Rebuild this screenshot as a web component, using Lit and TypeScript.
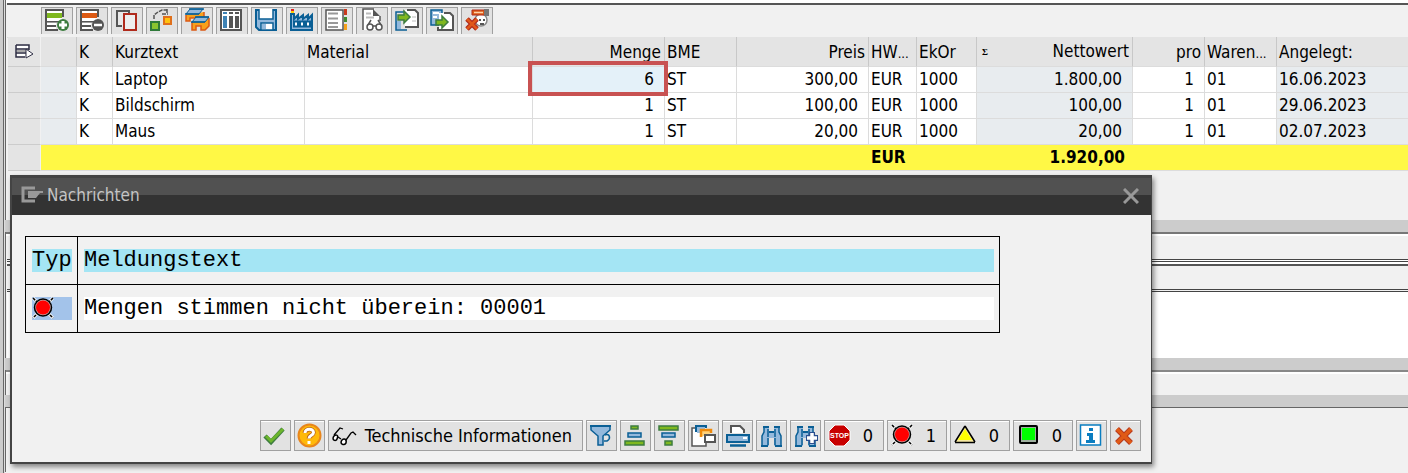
import { LitElement, html, css, svg, TemplateResult } from "lit";
import { customElement } from "lit/decorators.js";
import { classMap } from "lit/directives/class-map.js";

const GREY = "#555555";
const BLUE = "#0a5f95";
const SKY = "#94b9dc";
const GREEN = "#3d7c3f";
const LIME = "#7fb81f";
const RED = "#b02a1c";
const ORANGE = "#dc5a14";

const rows = (bar: string, disc: string, sign: TemplateResult) => svg`
  <path d="M1 1V22H13M1 2H18V9M1 13.5H15M1 18H11" fill="none" stroke="${GREY}" stroke-width="2"/>
  <rect x="2" y="3" width="15" height="10" fill="#fff"/>
  <rect x="2" y="5" width="15" height="5" fill="${bar}"/>
  <rect x="2" y="15" width="9" height="2" fill="#fff"/>
  <rect x="2" y="19" width="9" height="2" fill="#fff"/>
  <circle cx="18" cy="17" r="6" fill="${disc}"/>${sign}`;

const binoculars = svg`
  <path d="M4 3H9V7H14V3H19V7L21 12V22H14V14H9V22H2V12L4 7Z" fill="${SKY}"/>
  <path d="M3 3H9M14 3H20M9 8H14M1 22H8M15 22H22" stroke="${BLUE}" stroke-width="2"/>
  <path d="M4 4V8L2 12V22M8 14V21M8 5V13M15 5V13M15 14V21M19 4V8L21 12V22" fill="none" stroke="${BLUE}" stroke-width="1.5"/>`;

const redLight = svg`
  <path d="M1 1L21 21M21 1L1 21" stroke="#fff" stroke-width="3"/>
  <path d="M1 1L21 21M21 1L1 21" stroke="#000" stroke-width="1.500" stroke-dasharray="3 1"/>
  <circle cx="11" cy="10.500" r="8.500" fill="#c9a0a0" stroke="#000" stroke-width="1.500"/>
  <circle cx="11" cy="10.500" r="7" fill="#f00"/>`;

const ICONS: Record<string, TemplateResult> = {
  add: rows(LIME, GREEN, svg`<path d="M18 13V21M14 17H22" stroke="#fff" stroke-width="3"/>`),
  remove: rows(ORANGE, GREY, svg`<path d="M14 17H22" stroke="#fff" stroke-width="2.500"/>`),
  copy: svg`
    <rect x="1" y="2" width="14" height="17" fill="#e8e8e8"/>
    <path d="M14 3H2V18H7M14 2V5" fill="none" stroke="${GREY}" stroke-width="2"/>
    <rect x="9" y="6" width="12" height="16" fill="#eee" stroke="${RED}" stroke-width="2"/>`,
  link: svg`
    <rect x="1" y="14" width="8" height="8" fill="#8ac52f" stroke="#2f7a3a" stroke-width="2"/>
    <rect x="14" y="9" width="7" height="7" fill="#ffc20e" stroke="#e0701c" stroke-width="2"/>
    <path d="M4 11V7L8 4L12 2H18M17 1V6M12 6H18" fill="none" stroke="${GREY}" stroke-width="1.500" stroke-dasharray="4 1"/>`,
  tables: svg`
    <path d="M1 7V13H5V10H12V13H16L19 9V4" fill="#f8a11c" stroke="${ORANGE}" stroke-width="1.500"/>
    <path d="M5 1H18L14 6H1Z" fill="${SKY}" stroke="${BLUE}" stroke-width="1"/>
    <path d="M4 1H19M0 6H14" stroke="${BLUE}" stroke-width="1.500"/>
    <path d="M7 14V22H11V18H16V22H20L24 18V10" fill="#f8a11c" stroke="${ORANGE}" stroke-width="1.500"/>
    <path d="M11 9H24L20 14H7Z" fill="${SKY}" stroke="${BLUE}" stroke-width="1"/>
    <path d="M10 9H24M6 14H20" stroke="${BLUE}" stroke-width="1.500"/>`,
  columns: svg`
    <rect x="1" y="2" width="20" height="20" fill="#fff" stroke="${GREY}" stroke-width="2"/>
    <path d="M5 8V20M5 4V6" stroke="#3f83b5" stroke-width="4"/>
    <path d="M11 8V20M17 8V20M11 4V6M17 4V6" stroke="${GREY}" stroke-width="4"/>`,
  save: svg`
    <path d="M1 2H21V22H4L1 19Z" fill="${SKY}" stroke="${BLUE}" stroke-width="2"/>
    <path d="M4 1V11H18V1" fill="#fff" stroke="${BLUE}" stroke-width="1.500"/>
    <rect x="6" y="15" width="12" height="7" fill="#fff" stroke="${BLUE}" stroke-width="1.500"/>
    <rect x="7" y="16" width="4" height="5" fill="${SKY}"/>`,
  factory: svg`
    <path d="M1 22V6H4V11L8 7V11L13 7V11L18 7V11L22 7V22Z" fill="${SKY}" stroke="${BLUE}" stroke-width="2"/>
    <rect x="1" y="1" width="3" height="2" fill="#d22"/><rect x="1" y="3" width="3" height="2" fill="#fc0"/>
    <path d="M4 13.500H8V18.500H4ZM10 13.500H14V18.500H10ZM16 13.500H20V18.500H16Z" fill="#fff" stroke="${BLUE}" stroke-width="2"/>`,
  index: svg`
    <rect x="1" y="2" width="17" height="20" fill="#fff" stroke="${GREY}" stroke-width="1.500"/>
    <path d="M3 5.500H13M3 10.500H13M3 15H13M3 19H13" stroke="#999" stroke-width="2"/>
    <rect x="19" y="1" width="3" height="6" fill="#c93a1e"/><rect x="19" y="9" width="3" height="5" fill="#3f8c2f"/>
    <rect x="19" y="16" width="3" height="6" fill="#f5a21b"/>`,
  inspect: svg`
    <path d="M3 1H14L20 8V22H3Z" fill="#fff"/>
    <path d="M3 22V1H14M20 8V13" fill="none" stroke="${GREY}" stroke-width="1.500"/>
    <path d="M13 1L20 8H13Z" fill="${GREY}"/>
    <path d="M6 5.500H11M6 9.500H14" stroke="#bbb" stroke-width="2"/>
    <circle cx="10" cy="19" r="3" fill="#fff" stroke="${GREY}" stroke-width="1.500"/>
    <circle cx="19" cy="19" r="3" fill="#fff" stroke="${GREY}" stroke-width="1.500"/>
    <path d="M8 17L11 12M21 17L18 12M13 18H16" stroke="${GREY}" stroke-width="1.500"/>`,
  importDoc: svg`
    <path d="M10 2H20L23 5V20H10Z" fill="#fff"/>
    <path d="M12 2H20L23 5V19H10" fill="none" stroke="${GREY}" stroke-width="2"/>
    <path d="M17 9H21M17 13H21" stroke="#bbb"/>
    <path d="M1 13H6V21H1Z" fill="${SKY}"/>
    <path d="M9 4H1V22H12" fill="none" stroke="${BLUE}" stroke-width="1.500"/>
    <path d="M3 7H9V3L15 9L9 15V12H3Z" fill="${LIME}" stroke="${GREEN}" stroke-width="1.500"/>`,
  exportDoc: svg`
    <path d="M1 2H12V17H1Z" fill="${SKY}" stroke="${BLUE}" stroke-width="1.500"/>
    <path d="M3 5H9M3 9H7" stroke="#fff" stroke-width="2"/>
    <path d="M9 5H20L23 8V22H9Z" fill="#fff"/>
    <path d="M14 5H20L23 8V22H8V19" fill="none" stroke="${GREY}" stroke-width="2"/>
    <path d="M6 12H12V8L18 14L12 20V17H6Z" fill="${LIME}" stroke="${GREEN}" stroke-width="1.500"/>`,
  cancelItem: svg`
    <circle cx="16" cy="12" r="6" fill="#fff" stroke="#888" stroke-width="1.500"/>
    <path d="M14 12H16M18 12H20M15 16H19" stroke="${GREY}" stroke-width="2"/>
    <path d="M7 2H20V7H7Z" fill="${ORANGE}" stroke="${RED}" stroke-width="1"/>
    <path d="M9 4.500H18" stroke="#ffd0a8" stroke-width="1.500"/>
    <rect x="19" y="1" width="5" height="7" fill="#777"/>
    <path d="M2 11L12 21M12 11L2 21" stroke="${RED}" stroke-width="5"/>
    <path d="M2 11L12 21M12 11L2 21" stroke="#e0581a" stroke-width="2.500"/>`,
  check: svg`<path d="M1 12L7 18L19 5" fill="none" stroke="${GREEN}" stroke-width="4.500"/>
    <path d="M2 12L7 17L19 5" fill="none" stroke="#6cb52c" stroke-width="3"/>`,
  help: svg`<circle cx="11.500" cy="11.500" r="11" fill="#ffb909" stroke="#e8861c" stroke-width="2"/>
    <path d="M7 9C7 4 15.500 4 15.500 8.500C15.500 11.500 11 11 11 14.500" fill="none" stroke="#b9631a" stroke-width="4.500"/>
    <path d="M7 9C7 4 15.500 4 15.500 8.500C15.500 11.500 11 11 11 14.500M11 17V20" fill="none" stroke="#fff" stroke-width="3"/>`,
  glasses: svg`
    <path d="M2 12C-1 16 4 18 5 15C7 11 4 10 2 12ZM10 16C7 20 12 22 14 19C15 15 12 14 10 16Z" fill="#fff" stroke="#000" stroke-width="1.500"/>
    <path d="M2 11L8 4L11 5M6 13L9 15M14 16L19 9L21 8L24 11" fill="none" stroke="#000" stroke-width="1.300"/>`,
  filter: svg`
    <path d="M1 2H20V6L13 12V21H8V12L1 6Z" fill="${SKY}" stroke="${BLUE}" stroke-width="1.500"/>
    <path d="M0 2H21" stroke="${BLUE}" stroke-width="2"/>
    <path d="M15 11C20 9 21 15 17 17H14" fill="#e3e3e3" stroke="${BLUE}" stroke-width="1.500"/>`,
  sortUp: svg`
    <rect x="7" y="2" width="7" height="3" fill="${LIME}" stroke="${GREEN}" stroke-width="1.500"/>
    <rect x="4" y="9" width="13" height="4" fill="${SKY}" stroke="${BLUE}" stroke-width="1.500"/>
    <rect x="1" y="17" width="19" height="4" fill="${LIME}" stroke="${GREEN}" stroke-width="1.500"/>`,
  sortDown: svg`
    <rect x="1" y="2" width="19" height="4" fill="${LIME}" stroke="${GREEN}" stroke-width="1.500"/>
    <rect x="4" y="9" width="13" height="4" fill="${SKY}" stroke="${BLUE}" stroke-width="1.500"/>
    <rect x="7" y="17" width="7" height="4" fill="${LIME}" stroke="${GREEN}" stroke-width="1.500"/>`,
  layers: svg`
    <path d="M0 4H14V22H0Z" fill="#fff"/><path d="M3 4H0V22H14V19" fill="none" stroke="${GREY}" stroke-width="1.500"/>
    <path d="M4 8V2H14V4" fill="none" stroke="${BLUE}" stroke-width="2"/><rect x="5" y="3" width="8" height="6" fill="${SKY}"/>
    <path d="M9 13V6H19V9" fill="#ffd27a" stroke="#f08a0a" stroke-width="2.500"/>
    <rect x="13" y="11" width="10" height="7" fill="#fff" stroke="${GREY}" stroke-width="2"/>`,
  print: svg`
    <path d="M5 9V2H14L18 6V9" fill="#fff" stroke="${GREY}" stroke-width="2"/>
    <rect x="1" y="11" width="22" height="7" fill="${SKY}" stroke="${BLUE}" stroke-width="2"/>
    <rect x="17" y="13" width="4" height="2" fill="#fff"/>
    <path d="M4 21.500H20" stroke="${BLUE}" stroke-width="2.500"/>`,
  find: binoculars,
  findNext: svg`${binoculars}<path d="M18 8V20M12 14H24" stroke="#2b4f8f" stroke-width="6"/>
    <path d="M18 9V19M13 14H23" stroke="#fff" stroke-width="3.500"/>`,
  stop: svg`<path d="M7 1H16L22 7V16L16 22H7L1 16V7Z" fill="#c80000" stroke="#fff" stroke-width="1"/>
    <text x="11.500" y="14" text-anchor="middle" font-size="7" font-weight="700" font-family="Liberation Sans, sans-serif" fill="#fff">STOP</text>`,
  red: redLight,
  yellow: svg`<path d="M11 2L21 19H1Z" fill="#f7e9a0"/><path d="M11 2L1 18M11 2L21 18M1 18.500H21" stroke="#000" stroke-width="1.500"/>
    <path d="M11 5L18 16H4Z" fill="#ff0"/>`,
  green: svg`<rect x="3" y="2" width="17" height="17" rx="1" fill="#9fb09f" stroke="#000" stroke-width="2"/>
    <rect x="5" y="4" width="13" height="12" fill="#0f0"/>`,
  info: svg`<rect x="0.500" y="1" width="20" height="20" fill="#fff" stroke="#0a7dc0" stroke-width="1.500"/>
    <path d="M9 4H13V7H9ZM7 9H13V16H15V19H6V16H9V12H7Z" fill="#0a7dc0"/>`,
  cross: svg`<path d="M3 5L17 19M17 5L3 19" stroke="#b8381c" stroke-width="5.500"/>
    <path d="M3 5L17 19M17 5L3 19" stroke="#e05a16" stroke-width="3.500"/>`,
};

const icon = (name: string) =>
  html`<svg class="icon" viewBox="0 0 24 24" width="24" height="24" aria-hidden="true">${ICONS[name]}</svg>`;

const TOOLS: [string, string][] = [
  ["add", "Zeile einfügen"],
  ["remove", "Zeile löschen"],
  ["copy", "Kopieren"],
  ["link", "Verknüpfen"],
  ["tables", "Positionen"],
  ["columns", "Spalten"],
  ["save", "Sichern"],
  ["factory", "Werk"],
  ["index", "Verzeichnis"],
  ["inspect", "Anzeigen"],
  ["importDoc", "Importieren"],
  ["exportDoc", "Exportieren"],
  ["cancelItem", "Stornieren"],
];

const ITEMS = [
  ["K", "Laptop", "", "6", "ST", "300,00", "EUR", "1000", "1.800,00", "1", "01", "16.06.2023"],
  ["K", "Bildschirm", "", "1", "ST", "100,00", "EUR", "1000", "100,00", "1", "01", "29.06.2023"],
  ["K", "Maus", "", "1", "ST", "20,00", "EUR", "1000", "20,00", "1", "01", "02.07.2023"],
];
const NUMERIC = [3, 5, 8, 9];
const READONLY = [8, 11];

const ACTIONS: { icon: string; label: string; text?: string; count?: number }[] = [
  { icon: "check", label: "Weiter" },
  { icon: "help", label: "Hilfe" },
  { icon: "glasses", label: "Technische Informationen", text: "Technische Informationen" },
  { icon: "filter", label: "Filter" },
  { icon: "sortUp", label: "Aufsteigend sortieren" },
  { icon: "sortDown", label: "Absteigend sortieren" },
  { icon: "layers", label: "Layout" },
  { icon: "print", label: "Drucken" },
  { icon: "find", label: "Suchen" },
  { icon: "findNext", label: "Weitersuchen" },
  { icon: "stop", label: "Abbruch", count: 0 },
  { icon: "red", label: "Fehler", count: 1 },
  { icon: "yellow", label: "Warnungen", count: 0 },
  { icon: "green", label: "Informationen", count: 0 },
  { icon: "info", label: "Info" },
  { icon: "cross", label: "Abbrechen" },
];

@customElement("message-dialog")
export class MessageDialog extends LitElement {
  static styles = css`
    :host {
      display: block;
      box-sizing: border-box;
      background: #f1f1f1;
      border: solid #444;
      border-width: 0 1px 2px 2px;
      box-shadow: 2px 3px 5px rgba(0, 0, 0, 0.45);
    }
    .title {
      display: flex;
      align-items: center;
      justify-content: space-between;
      box-sizing: border-box;
      height: 40px;
      padding: 0 12px 3px 9px;
      border-top: 3px solid #444;
      background: linear-gradient(#515151 17px, #333 17px);
      color: #c4c4c4;
    }
    .caption {
      display: flex;
      align-items: center;
      gap: 4px;
      margin: 0;
      font-size: 17px;
      font-weight: 400;
      line-height: 24px;
    }
    .close {
      display: flex;
      padding: 0;
      border: 0;
      margin-top: 2px;
      background: none;
    }
    .body {
      padding: 21px 151px 87px 13px;
    }
    .messages {
      width: 100%;
      border-collapse: collapse;
      table-layout: fixed;
      font: 22px/24px "Courier New", "Liberation Mono", monospace;
      color: #000;
    }
    .messages th,
    .messages td {
      height: 48px;
      box-sizing: border-box;
      padding: 0 5px 0 6px;
      border: 1px solid #000;
      font-weight: 400;
      text-align: left;
    }
    .type {
      width: 52px;
    }
    .fill {
      display: block;
      height: 23px;
      white-space: nowrap;
      overflow: hidden;
    }
    .head {
      background: #a4e5f4;
    }
    .state {
      background: #a3c3ea;
    }
    .text {
      background: #fff;
    }
    .actions {
      display: flex;
      justify-content: flex-end;
      gap: 3px;
      padding: 0 10px 11px;
      font-size: 18px;
    }
    .action {
      display: flex;
      align-items: center;
      justify-content: space-between;
      box-sizing: border-box;
      width: 31px;
      height: 31px;
      padding: 0 2px 0 3px;
      border: 1px solid #a0a0a0;
      box-shadow: inset 0 1px #fff;
      background: #e2e2e2;
      color: #000;
      font: inherit;
      white-space: nowrap;
    }
    .wide {
      width: 255px;
      padding-right: 10px;
    }
    .counter {
      width: 60px;
      padding-right: 10px;
    }
    .icon {
      display: block;
      flex: none;
      overflow: visible;
    }
  `;

  render() {
    return html`
      <header class="title">
        <h1 class="caption">
          <svg width="22" height="18" viewBox="0 0 22 18" aria-hidden="true">
            <path d="M14 2H2V15H14" fill="none" stroke="#999" stroke-width="3" />
            <path d="M7 5H22V7H19L15 12H7Z" fill="#999" />
          </svg>
          Nachrichten
        </h1>
        <button class="close" aria-label="Schließen">
          <svg width="16" height="16" viewBox="0 0 16 16" aria-hidden="true">
            <path d="M1 1L15 15M15 1L1 15" stroke="#999" stroke-width="3" />
          </svg>
        </button>
      </header>
      <div class="body">
        <table class="messages">
          <tr>
            <th class="type"><span class="fill head">Typ</span></th>
            <th><span class="fill head">Meldungstext</span></th>
          </tr>
          <tr>
            <td><span class="fill state">${icon("red")}</span></td>
            <td><span class="fill text">Mengen stimmen nicht überein: 00001</span></td>
          </tr>
        </table>
      </div>
      <footer class="actions">
        ${ACTIONS.map(
          (a) => html`<button
            class=${classMap({ action: true, wide: !!a.text, counter: a.count !== undefined })}
            aria-label=${a.count === undefined ? a.label : `${a.label}: ${a.count}`}
          >
            ${icon(a.icon)}${a.text ? html`<span>${a.text}</span>` : ""}${a.count !== undefined
              ? html`<span>${a.count}</span>`
              : ""}
          </button>`
        )}
      </footer>
    `;
  }
}

@customElement("app-root")
export class AppRoot extends LitElement {
  static styles = css`
    :host {
      display: block;
      position: relative;
      box-sizing: border-box;
      min-height: 100vh;
      overflow: hidden;
      padding-left: 5px;
      background: linear-gradient(90deg, #ccc 3px, #666 3px, #666 4px, #ddd 4px, #ddd 5px, #f1f1f1 5px);
      color: #000;
      font: 17px/24px "DejaVu Sans Condensed", "Noto Sans", sans-serif;
    }
    .panel {
      border-left: 1px solid #666;
    }
    .items {
      height: 220px;
      box-sizing: border-box;
      padding: 3px 0 0 1px;
      background: linear-gradient(#fff 3px, #f1f1f1 3px);
    }
    .tools {
      display: flex;
      gap: 3px;
      height: 34px;
      box-sizing: border-box;
      padding: 2px 0 0 34px;
      border-top: 2px solid #555;
    }
    .tool {
      display: flex;
      align-items: flex-start;
      box-sizing: border-box;
      width: 32px;
      height: 27px;
      padding: 0 3px;
      border: 1px solid #a0a0a0;
      border-bottom: 0;
      background: #e2e2e2;
    }
    .tool .icon {
      display: block;
      overflow: visible;
    }
    .scroller {
      padding-left: 1px;
      border-top: 1px solid #ddd;
    }
    .grid {
      width: 100%;
      border-spacing: 0;
      table-layout: fixed;
      margin-top: -1px;
    }
    .grid th,
    .grid td {
      position: relative;
      box-sizing: border-box;
      height: 26px;
      padding: 0 2px 2px;
      border: solid #dcdcdc;
      border-width: 0 1px 1px 0;
      background: #fff;
      font-weight: 400;
      text-align: left;
      white-space: nowrap;
      line-height: 22px;
    }
    .grid .handle {
      background: #e4e4e4;
      border-bottom-color: #ccc;
      border-right-color: #f1f1f1;
    }
    .grid thead th {
      height: 30px;
      padding-bottom: 0;
      border-right-color: #c8c8c8;
      background: #e4e4e4;
    }
    .grid .readonly {
      background: #e8ecef;
    }
    .grid th:last-child,
    .grid td:last-child {
      border-right: 0;
    }
    .grid .num {
      padding-right: 10px;
      text-align: right;
    }
    .grid thead .num {
      padding-right: 3px;
    }
    .grid .sum {
      border-right: 0;
      background: #fff845;
      font-weight: 700;
    }
    .grid .sum.num {
      padding-right: 8px;
    }
    .grid .current {
      background: #e4f1f9;
    }
    .marker {
      position: absolute;
      inset: -6px -4px -4px -5px;
      border: 4px solid #c85252;
      z-index: 1;
    }
    .net {
      display: flex;
      justify-content: space-between;
    }
    .sigma {
      padding-left: 3px;
      font: 700 9px/24px "Liberation Serif", serif;
    }
    .more {
      font-size: 13px;
      line-height: 1;
    }
    .select {
      display: block;
      margin-left: 5px;
    }
    .w33 { width: 33px; }
    .w36 { width: 36px; }
    .w48 { width: 48px; }
    .w60 { width: 60px; }
    .w72 { width: 72px; }
    .w132 { width: 132px; }
    .w156 { width: 156px; }
    .w192 { width: 192px; }
    .w228 { width: 228px; }
    .band {
      height: 12px;
      background: #ccc;
    }
    .bar {
      box-sizing: border-box;
      height: 27px;
      border-top: 2px solid #777;
      box-shadow: inset 0 2px #fff;
      background: #f1f1f1;
    }
    .lower {
      height: 25px;
      border-top-color: #888;
    }
    .inner {
      box-sizing: border-box;
      height: 99px;
      margin-left: 1px;
      border-top: 3px double #444;
      padding-top: 2px;
      background: #fff;
    }
    .strip {
      box-sizing: border-box;
      height: 28px;
      border-top: 2px solid #555;
      border-bottom: 3px double #444;
      background: #f1f1f1;
    }
    .end {
      border-top: 1px solid #666;
      height: 64px;
    }
    .popup {
      position: absolute;
      top: 175px;
      left: 10px;
      right: 256px;
      z-index: 2;
    }
  `;

  private cell(value: string, col: number, row: number) {
    const current = row === 0 && col === 3;
    return html`<td
      class=${classMap({ num: NUMERIC.includes(col), readonly: READONLY.includes(col), current })}
    >${value}${current ? html`<span class="marker"></span>` : ""}</td>`;
  }

  render() {
    return html`
      <section class="panel items">
        <div class="tools" role="toolbar">
          ${TOOLS.map(([name, label]) => html`<button class="tool" aria-label=${label}>${icon(name)}</button>`)}
        </div>
        <div class="scroller">
          <table class="grid">
            <thead>
              <tr>
                <th class="handle w33">
                  <svg class="select" width="19" height="18" viewBox="0 0 19 18" aria-hidden="true">
                    <path d="M1 2H14V7M1 2V14H10M1 6H14M1 10H11" fill="none" stroke="#2f2f45" stroke-width="1.500" />
                    <path d="M2 7H12V9H2Z" fill="#aaa" />
                    <path d="M2 3H13V5H2ZM2 11H10V13H2Z" fill="#fff" />
                    <path d="M11 6V15L18 11Z" fill="#fff" stroke="#2f2f45" />
                  </svg>
                </th>
                <th class="w36"></th>
                <th class="w36">K</th>
                <th class="w192">Kurztext</th>
                <th class="w228">Material</th>
                <th class="w132 num">Menge</th>
                <th class="w72">BME</th>
                <th class="w132 num">Preis</th>
                <th class="w48">HW<span class="more">...</span></th>
                <th class="w60">EkOr</th>
                <th class="w156 num"><span class="net"><span class="sigma">Σ</span>Nettowert</span></th>
                <th class="w72 num">pro</th>
                <th class="w72">Waren<span class="more">...</span></th>
                <th>Angelegt:</th>
              </tr>
            </thead>
            <tbody>
              ${ITEMS.map(
                (item, row) => html`<tr>
                  <td class="handle"></td>
                  <td class="readonly"></td>
                  ${item.map((value, col) => this.cell(value, col, row))}
                </tr>`
              )}
              <tr>
                <td class="handle"></td>
                <td class="sum" colspan="7"></td>
                <td class="sum">EUR</td>
                <td class="sum"></td>
                <td class="sum num">1.920,00</td>
                <td class="sum" colspan="3"></td>
              </tr>
            </tbody>
          </table>
        </div>
      </section>
      <div class="band"></div>
      <section class="panel">
        <div class="bar"></div>
        <div class="inner"><div class="strip"></div></div>
      </section>
      <div class="band"></div>
      <section class="panel"><div class="bar lower"></div></section>
      <div class="band"></div>
      <section class="panel end"></section>
      <message-dialog class="popup" role="dialog" aria-label="Nachrichten"></message-dialog>
    `;
  }
}
